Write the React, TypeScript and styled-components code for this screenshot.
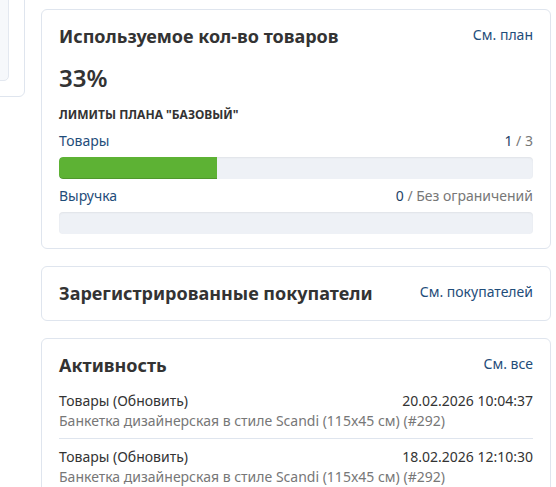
import React from "react";
import styled, { createGlobalStyle } from "styled-components";

const GlobalStyle = createGlobalStyle`
  html, body { margin: 0; padding: 0; background: #ffffff; }
  body {
    font-family: "Noto Sans", "Open Sans", "Liberation Sans", sans-serif;
    font-size: 14px;
    color: #333333;
    overflow: hidden;
  }
  * { box-sizing: border-box; }
`;

const Page = styled.div`
  display: flex;
  align-items: flex-start;
  gap: 16px;
  padding: 9px 5px 0 0;
  width: 556px;
  height: 487px;
  overflow: hidden;
`;

const Sidebar = styled.aside`
  flex: 0 0 225px;
  margin-left: -200px;
  margin-top: -109px;
`;

const SideCard = styled.div`
  border: 1px solid #dfe5ee;
  border-radius: 6px;
  padding: 15px;
  height: 197px;
  background: #ffffff;
`;

const SideInner = styled.div`
  height: 165px;
  border: 1px solid #e3e8f0;
  border-radius: 5px;
  background: #f6f8fb;
`;

const Main = styled.main`
  flex: 0 0 510px;
  display: flex;
  flex-direction: column;
  gap: 17px;
`;

const Card = styled.section<{ $pb?: number }>`
  border: 1px solid #dfe5ee;
  border-radius: 6px;
  background: #ffffff;
  padding: 16px 17px ${(p) => p.$pb ?? 16}px 17px;
`;

const CardHeader = styled.div<{ $mb?: number }>`
  display: flex;
  justify-content: space-between;
  align-items: flex-start;
  margin-bottom: ${(p) => p.$mb ?? 0}px;
`;

const Title = styled.h2`
  margin: 0;
  font-size: 18px;
  line-height: 21.6px;
  font-weight: 700;
  color: #333333;
`;

const HeaderLink = styled.a`
  font-size: 14px;
  line-height: 17px;
  color: #1f4d7a;
  text-decoration: none;
  white-space: nowrap;
`;

const Percent = styled.div`
  margin-top: 15px;
  font-size: 24px;
  line-height: 29px;
  font-weight: 600;
  color: #333333;
`;

const LimitsLabel = styled.div`
  margin-top: 14px;
  font-size: 12px;
  line-height: 17px;
  font-weight: 700;
  text-transform: uppercase;
  color: #333333;
`;

const MetricRow = styled.div<{ $mt: number }>`
  display: flex;
  justify-content: space-between;
  margin-top: ${(p) => p.$mt}px;
  font-size: 14px;
  line-height: 21px;
`;

const MetricName = styled.span`
  color: #1f4d7a;
`;

const MetricValue = styled.span`
  color: #777777;
`;

const MetricUsed = styled.span`
  color: #1c3f66;
`;

const Track = styled.div`
  margin-top: 6px;
  height: 22px;
  border-radius: 4px;
  background: #eef1f6;
  box-shadow: inset 0 1px 2px rgba(0, 0, 0, 0.06);
  overflow: hidden;
`;

const Fill = styled.div`
  height: 100%;
  background: #5db234;
  box-shadow: inset 0 -1px 0 rgba(0, 0, 0, 0.15);
  border-radius: 4px 0 0 4px;
`;

const ActivityRow = styled.div<{ $last?: boolean }>`
  padding: 8px 0 7px;
  border-bottom: ${(p) => (p.$last ? "none" : "1px solid #dfe5ee")};
  font-size: 14px;
  line-height: 20px;
`;

const ActivityTop = styled.div`
  display: flex;
  justify-content: space-between;
  color: #333333;
`;

const ActivitySub = styled.div`
  color: #777777;
`;

const activities = [
  {
    action: "Товары (Обновить)",
    date: "20.02.2026 10:04:37",
    item: "Банкетка дизайнерская в стиле Scandi (115x45 см) (#292)",
  },
  {
    action: "Товары (Обновить)",
    date: "18.02.2026 12:10:30",
    item: "Банкетка дизайнерская в стиле Scandi (115x45 см) (#292)",
  },
];

export default function App() {
  const used = 1;
  const limit = 3;
  return (
    <>
      <GlobalStyle />
      <Page>
        <Sidebar>
          <SideCard>
            <SideInner />
          </SideCard>
        </Sidebar>
        <Main>
          <Card $pb={14}>
            <CardHeader>
              <Title>Используемое кол-во товаров</Title>
              <HeaderLink href="#">См. план</HeaderLink>
            </CardHeader>
            <Percent>33%</Percent>
            <LimitsLabel>Лимиты плана "Базовый"</LimitsLabel>
            <MetricRow $mt={7}>
              <MetricName>Товары</MetricName>
              <MetricValue>
                <MetricUsed>{used}</MetricUsed> / {limit}
              </MetricValue>
            </MetricRow>
            <Track>
              <Fill style={{ width: `${(used / limit) * 100}%` }} />
            </Track>
            <MetricRow $mt={6}>
              <MetricName>Выручка</MetricName>
              <MetricValue>
                <MetricUsed>0</MetricUsed> / Без ограничений
              </MetricValue>
            </MetricRow>
            <Track />
          </Card>
          <Card>
            <CardHeader>
              <Title>Зарегистрированные покупатели</Title>
              <HeaderLink href="#">См. покупателей</HeaderLink>
            </CardHeader>
          </Card>
          <Card>
            <CardHeader $mb={6}>
              <Title>Активность</Title>
              <HeaderLink href="#">См. все</HeaderLink>
            </CardHeader>
            {activities.map((a, i) => (
              <ActivityRow key={i} $last={i === activities.length - 1}>
                <ActivityTop>
                  <span>{a.action}</span>
                  <span>{a.date}</span>
                </ActivityTop>
                <ActivitySub>{a.item}</ActivitySub>
              </ActivityRow>
            ))}
          </Card>
        </Main>
      </Page>
    </>
  );
}
